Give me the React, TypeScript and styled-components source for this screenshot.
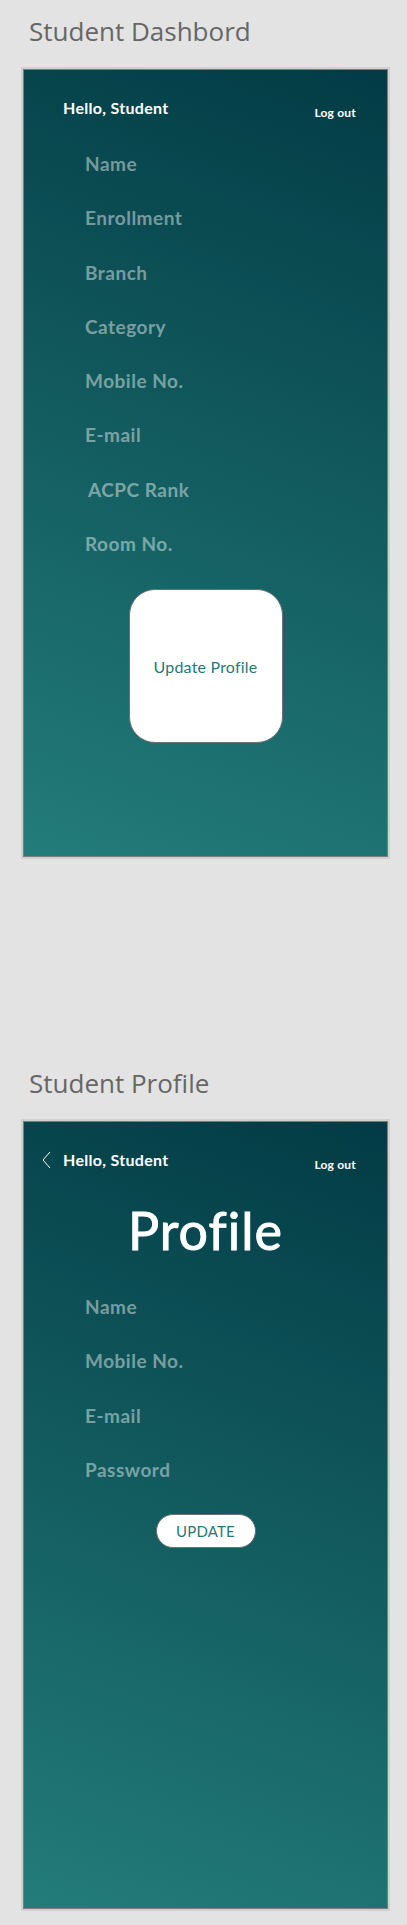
import React from 'react';
import styled, { createGlobalStyle } from 'styled-components';

const GlobalStyle = createGlobalStyle`
  html, body {
    margin: 0;
    padding: 0;
    background: #e3e3e3;
  }
  * {
    box-sizing: border-box;
  }
`;

const Page = styled.div`
  width: 407px;
  min-height: 1925px;
  padding: 15px 17px 0 21px;
  background: #e3e3e3;
`;

const Section = styled.section<{ gap?: number }>`
  display: flex;
  flex-direction: column;
  margin-bottom: ${props => props.gap ?? 0}px;
`;

const ArtboardTitle = styled.h2`
  margin: 0 0 20px 8px;
  font-family: 'Open Sans', 'Noto Sans', sans-serif;
  font-weight: 400;
  font-size: 26px;
  line-height: 32px;
  color: #666666;
`;

const Frame = styled.div`
  width: 369px;
  padding: 2px;
  background: #d0d0d0;
`;

const Screen = styled.div`
  height: 788px;
  border: 1px solid #7c7c7c;
  background: linear-gradient(20deg, #237c7a 0%, #023b45 100%);
  display: flex;
  flex-direction: column;
  padding: 28px 31px 0 0;
  font-family: 'Lato', 'Open Sans', sans-serif;
`;

const Header = styled.div`
  display: flex;
  align-items: baseline;
  justify-content: space-between;
  padding-left: 18px;
  height: 20px;
`;

const Greeting = styled.div`
  display: flex;
  align-items: center;
  gap: 12px;
  font-size: 16px;
  font-weight: 700;
  line-height: 20px;
  letter-spacing: 0.3px;
  color: #ffffff;
`;

const BackSlot = styled.span<{ visible: boolean }>`
  width: 9px;
  height: 18px;
  display: inline-flex;
  visibility: ${props => (props.visible ? 'visible' : 'hidden')};
`;

const LogOut = styled.a`
  font-size: 12px;
  font-weight: 700;
  line-height: 20px;
  letter-spacing: 0.2px;
  color: #ffffff;
  cursor: pointer;
`;

const PageHeading = styled.h1`
  margin: 30px 0 0 31px;
  text-align: center;
  font-size: 52px;
  font-weight: 400;
  line-height: 60px;
  letter-spacing: 1px;
  color: #ffffff;
  -webkit-text-stroke: 0.9px #ffffff;
`;

const Fields = styled.div<{ top: number }>`
  display: flex;
  flex-direction: column;
  gap: 30.3px;
  padding-left: 61px;
  margin-top: ${props => props.top}px;
`;

const FieldLabel = styled.div<{ indent?: number }>`
  font-size: 19px;
  font-weight: 700;
  line-height: 24px;
  letter-spacing: 0.5px;
  color: rgba(255, 255, 255, 0.45);
  padding-left: ${props => props.indent ?? 0}px;
`;

const Center = styled.div<{ top: number }>`
  display: flex;
  justify-content: center;
  margin: ${props => props.top}px 0 0 31px;
`;

const TileButton = styled.button`
  width: 154px;
  height: 154px;
  border: 1px solid #707070;
  border-radius: 26px;
  background: #ffffff;
  font-family: 'Lato', 'Open Sans', sans-serif;
  font-size: 16px;
  letter-spacing: 0.2px;
  color: #1f7a78;
  cursor: pointer;
`;

const PillButton = styled.button`
  width: 100px;
  height: 34px;
  border: 1px solid #707070;
  border-radius: 17px;
  background: #ffffff;
  font-family: 'Lato', 'Open Sans', sans-serif;
  font-size: 15px;
  letter-spacing: 0.2px;
  color: #1f7a78;
  cursor: pointer;
`;

const ChevronLeft = () => (
  <svg width="9" height="18" viewBox="0 0 9 18" fill="none">
    <path d="M8 1 L1 9 L8 17" stroke="#ffffff" strokeWidth="1" />
  </svg>
);

const TopBar: React.FC<{ back?: boolean }> = ({ back = false }) => (
  <Header>
    <Greeting>
      <BackSlot visible={back}>
        <ChevronLeft />
      </BackSlot>
      Hello, Student
    </Greeting>
    <LogOut>Log out</LogOut>
  </Header>
);

const dashboardFields: { label: string; indent?: number }[] = [
  { label: 'Name' },
  { label: 'Enrollment' },
  { label: 'Branch' },
  { label: 'Category' },
  { label: 'Mobile No.' },
  { label: 'E-mail' },
  { label: 'ACPC Rank', indent: 3 },
  { label: 'Room No.' },
];

const profileFields = ['Name', 'Mobile No.', 'E-mail', 'Password'];

const App: React.FC = () => {
  return (
    <>
      <GlobalStyle />
      <Page>
        <Section gap={208}>
          <ArtboardTitle>Student Dashbord</ArtboardTitle>
          <Frame>
            <Screen>
              <TopBar />
              <Fields top={34}>
                {dashboardFields.map(f => (
                  <FieldLabel key={f.label} indent={f.indent}>
                    {f.label}
                  </FieldLabel>
                ))}
              </Fields>
              <Center top={33}>
                <TileButton>Update Profile</TileButton>
              </Center>
            </Screen>
          </Frame>
        </Section>

        <Section>
          <ArtboardTitle>Student Profile</ArtboardTitle>
          <Frame>
            <Screen>
              <TopBar back />
              <PageHeading>Profile</PageHeading>
              <Fields top={35}>
                {profileFields.map(label => (
                  <FieldLabel key={label}>{label}</FieldLabel>
                ))}
              </Fields>
              <Center top={32}>
                <PillButton>UPDATE</PillButton>
              </Center>
            </Screen>
          </Frame>
        </Section>
      </Page>
    </>
  );
};

export default App;
